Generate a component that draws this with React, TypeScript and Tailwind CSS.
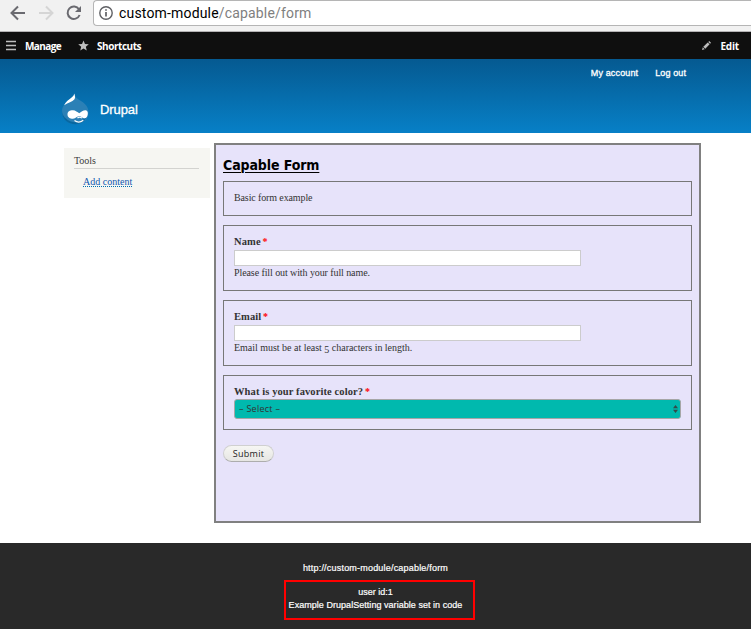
import type { ReactNode } from 'react';

const serif = "font-['Liberation_Serif',serif]";
const sans = "font-['Liberation_Sans',sans-serif]";

function BrowserBar() {
  return (
    <div className="flex h-8 items-start border-b border-[#b4b2b4] bg-[#f1f1f1]">
      <svg className="h-[31px] w-[93px] shrink-0" viewBox="0 0 93 31" fill="none" strokeWidth="2">
        <path d="M25 13H12M18 6.500 11.500 13 18 19.500" stroke="#6a6a70" />
        <path d="M39 13h13M46 6.500 52.500 13 46 19.500" stroke="#d5d5d5" />
        <path d="M79 9.300A6.200 6.200 0 1 0 79.600 15" stroke="#6a6a70" />
        <path d="M81 6v6h-6z" fill="#6a6a70" />
      </svg>
      <div className="flex h-[26px] flex-1 items-center rounded-l-[4px] border border-r-0 border-[#b5b5b5] bg-white pl-[5px]">
        <svg className="size-[14px] shrink-0" viewBox="0 0 14 14" fill="none" stroke="#5f6064" strokeWidth="1.400">
          <circle cx="7" cy="7" r="6.200" />
          <path d="M7 6v4.500M7 3.300v1.500" strokeWidth="1.700" />
        </svg>
        <span className="ml-[6px] font-['Roboto',sans-serif] text-[14px] leading-[20px] tracking-[0.17px] text-[#808080]">
          <span className="text-black">custom-module</span>/capable/form
        </span>
      </div>
    </div>
  );
}

function Toolbar() {
  return (
    <div className="flex h-[27px] items-center bg-[#0f0f0f] font-['Open_Sans',sans-serif] text-[10px] font-bold text-white">
      <svg className="ml-[6px] h-[11px] w-[10px]" viewBox="0 0 10 11" stroke="#bebebe" strokeWidth="1.600">
        <path d="M0 1.500h10M0 5.500h10M0 9.500h10" />
      </svg>
      <span className="ml-[9px] w-[53px] pt-px tracking-[-0.6px]">Manage</span>
      <svg className="size-[11px]" viewBox="0 0 24 24" fill="#bebebe">
        <path d="m12 1 3.200 7.800 8.300.6-6.400 5.300 2 8.100-7.100-4.400-7.100 4.400 2-8.100L.5 9.400l8.300-.6z" />
      </svg>
      <span className="ml-[8px] pt-px tracking-[-0.45px]">Shortcuts</span>
      <svg className="ml-auto size-[9px]" viewBox="0 0 9 9" fill="#bebebe">
        <path d="M0 9l.8-2.700L2.700 8.200zM1.300 5.700 5.700 1.400 7.600 3.300 3.300 7.700zM6.300.9 7.200 0 9 1.800l-.9.900z" />
      </svg>
      <span className="mr-[12px] ml-[9px] pt-px tracking-[-0.2px]">Edit</span>
    </div>
  );
}

function Druplicon() {
  return (
    <svg className="-mt-px h-[32px] w-[28px]" viewBox="0 0 28 32">
      <path d="M13.500 1C14.500 5 17 6 20 8c4.500 2.800 7.500 6 7.500 11.500C27.500 27 21.500 31 14.500 31S1 26 1 18.500C1 12.500 5 10 8 7.500 11 5.200 13 4 13.500 1z" fill="#2b80b6" />
      <path d="M1 18c.5 5 4 8.500 9 10.500 6 2 12-.5 15.500-4.500C23.500 29 19 31.200 14.500 31.200 7 31.200 1 26.500 1 18z" fill="#0867a0" />
      <path d="M13.300.5c.8 2.500 1.200 4.500 0 6-2 2.200-6 3-10.200 5.800 1.500-3.500 4.400-5.100 6.900-7.200C12.300 3.300 13 2 13.300.5z" fill="#fff" />
      <path d="M6.500 21.500c0-3 2.500-4.300 5.500-4.200 2.500.1 4.500 2 6.200 3 2-1.400 4-3.200 6.500-3 1.800.2 2.500 2.200 2 4.500-.5 2.300-1.500 3.600-3.200 3.500-2 0-3.500-2.300-5.300-2.300s-3.500 2.700-6.200 2.700c-3 0-5.500-1.300-5.500-4.200z" fill="#fff" />
      <path d="M16.500 25.200c1-1.300 3.500-1.400 4.200.1M13.500 27.500c2.500 2 6 2 8.800-.2" fill="none" stroke="#fff" strokeWidth="1.200" />
    </svg>
  );
}

function Header() {
  return (
    <header className={`h-[74px] bg-linear-to-b from-[#055a91] to-[#0780c7] text-white ${sans}`}>
      <nav className="flex h-[29px] items-center justify-end pt-px pr-[65px] text-[9px] [-webkit-text-stroke:0.3px_white]">
        <span className="mr-[17px] tracking-[0.15px]">My account</span>
        <span className="tracking-[0.1px]">Log out</span>
      </nav>
      <div className="flex items-center pt-[6px] pl-[61px]">
        <Druplicon />
        <span className="ml-[11px] text-[13px] tracking-[-0.1px] [-webkit-text-stroke:0.3px_white]">Drupal</span>
      </div>
    </header>
  );
}

function Sidebar() {
  return (
    <aside className={`mt-[5px] h-[50px] w-[146px] bg-[#f6f6f2] pr-[11px] pl-[10px] text-[10px] ${serif}`}>
      <h2 className="h-[21px] border-b border-[#d3d3d0] pt-[6px] leading-[13px] tracking-[-0.05px] text-[#3b3b3b]">Tools</h2>
      <div className="pt-[7px] pl-[9px]">
        <a className="block h-[11px] w-[49px] border-b border-dotted border-[#0071b3] leading-[12px] whitespace-nowrap text-[#0f58b0]">Add content</a>
      </div>
    </aside>
  );
}

function Box({ className, children }: { className: string; children: ReactNode }) {
  return <div className={`border border-[#777] pr-[10px] pl-[10px] ${className}`}>{children}</div>;
}

function Label({ children }: { children: ReactNode }) {
  return (
    <div className="h-[15px] text-[10.5px] leading-[13px] font-bold tracking-[0.1px]">
      {children} <span className="-ml-px text-[10px] text-[#f00]">*</span>
    </div>
  );
}

function Field({ label, children }: { label: string; children: ReactNode }) {
  return (
    <Box className="mb-[9px] h-[66px] pt-[9px]">
      <Label>{label}</Label>
      <div className="h-[16px] w-[347px] border border-[#ccc] bg-white" />
      <div className="leading-[13px] tracking-[-0.09px]">{children}</div>
    </Box>
  );
}

function CapableForm() {
  return (
    <main className={`ml-[4px] h-[380px] w-[487px] border-2 border-[#808080] bg-[#e7e3fa] px-[7px] text-[10px] text-[#333] ${serif}`}>
      <h1 className="h-[36px] pt-[10px] font-['DejaVu_Sans_Condensed','DejaVu_Sans',sans-serif] text-[14px] leading-[20px] font-bold tracking-[-0.1px] text-black underline decoration-1 underline-offset-2">
        Capable Form
      </h1>
      <Box className="mb-[9px] h-[35px] pt-[9px] leading-[13px]">
        <span className="tracking-[-0.12px]">Basic form example</span>
      </Box>
      <Field label="Name">Please fill out with your full name.</Field>
      <Field label="Email">
        <span className="tracking-[-0.02px]">
          Email must be at least <span className="relative top-[2px]">5</span> characters in length.
        </span>
      </Field>
      <Box className="h-[55px] pt-[9px]">
        <Label>What is your favorite color?</Label>
        <div className="-mt-px flex h-[20px] w-[447px] items-center justify-between rounded-[3px] border border-[#a6a6a6] bg-[#00b9ae] pr-[2px] pl-[4px] font-['Open_Sans',sans-serif] text-[9px]">
          <span className="tracking-[0.27px]">– Select –</span>
          <svg className="h-[8px] w-[5px]" viewBox="0 0 5 8" fill="#334b49">
            <path d="M0 3.300 2.500 0 5 3.300zM0 4.700h5L2.500 8z" />
          </svg>
        </div>
      </Box>
      <button className="mt-[15px] flex h-[17px] w-[51px] items-center justify-center rounded-full border border-[#d0d0d0] border-b-[#adadad] bg-linear-to-b from-[#f6f6f3] to-[#e6e6e3] font-['Open_Sans',sans-serif] text-[9px] tracking-[0.25px] text-[#222]">
        Submit
      </button>
    </main>
  );
}

function Footer() {
  return (
    <footer className={`flex h-[86px] flex-col items-center bg-[#292929] pt-[19px] text-[9px] leading-[13px] text-white ${sans}`}>
      <div className="tracking-[0.2px] [-webkit-text-stroke:0.2px_white]">http://custom-module/capable/form</div>
      <div className="mt-[5px] mr-[-8px] h-[40px] w-[191px] border-2 border-[#f00] pt-[4px] pr-[8px] text-center [-webkit-text-stroke:0.2px_white]">
        <div>user id:1</div>
        <div className="tracking-[0.04px] whitespace-nowrap">Example DrupalSetting variable set in code</div>
      </div>
    </footer>
  );
}

export default function App() {
  return (
    <div className="h-[629px] w-[751px] overflow-hidden bg-white">
      <BrowserBar />
      <Toolbar />
      <Header />
      <div className="flex h-[410px] items-start pt-[10px] pl-[64px]">
        <Sidebar />
        <CapableForm />
      </div>
      <Footer />
    </div>
  );
}
